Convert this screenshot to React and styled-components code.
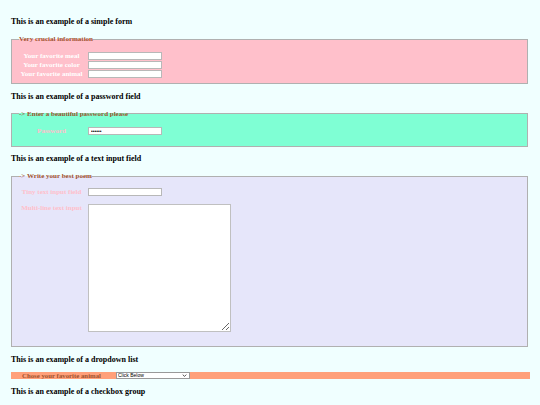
import React from 'react'
import styled, { createGlobalStyle } from 'styled-components'

const GlobalStyle = createGlobalStyle`
    html, body {
        margin: 0;
        padding: 0;
        background: #f0ffff;
    }
    body {
        font-family: "Liberation Serif", "Times New Roman", serif;
    }
`

function App() {
    return (
        <Page>
            <GlobalStyle />
            <Heading>This is an example of a simple form</Heading>
            <Box bg="#ffc0cb" pt="8px" pb="4.5px">
                <Legend>Very crucial information</Legend>
                <Rows gap="1px">
                    <Label color="#ffffff">Your favorite meal</Label>
                    <Field type="text" />
                    <Label color="#ffffff">Your favorite color</Label>
                    <Field type="text" />
                    <Label color="#ffffff">Your favorite animal</Label>
                    <Field type="text" />
                </Rows>
            </Box>

            <Heading gapTop>This is an example of a password field</Heading>
            <Box bg="#7fffd4" pt="8px" pb="11.5px">
                <Legend>-&gt; Enter a beautiful password please</Legend>
                <Rows gap="1px">
                    <Label color="#ffc0cb">Password</Label>
                    <Field type="password" defaultValue="secret" />
                </Rows>
            </Box>

            <Heading>This is an example of a text input field</Heading>
            <Box bg="#e6e6fa" pt="7px" pb="13.5px">
                <Legend>-&gt; Write your best poem</Legend>
                <Rows gap="8px">
                    <Label color="#ffc0cb">Tiny text input field</Label>
                    <Field type="text" />
                    <Label color="#ffc0cb" top>Multi-line text input</Label>
                    <Poem />
                </Rows>
            </Box>

            <Heading gapTop>This is an example of a dropdown list</Heading>
            <Bar>
                <BarLabel>Chose your favorite animal</BarLabel>
                <SelectWrap>
                    <Choice defaultValue="">
                        <option value="">Click Below</option>
                        <option>Cat</option>
                        <option>Dog</option>
                    </Choice>
                    <Chevron viewBox="0 0 8 5">
                        <path d="M1 1 L4 4 L7 1" fill="none" stroke="#222" strokeWidth="1.3" />
                    </Chevron>
                </SelectWrap>
            </Bar>

            <Heading gapTop>This is an example of a checkbox group</Heading>
        </Page>
    )
}

export default App

const Page = styled.div`
    padding: 17px 11px 0 11px;
    display: flex;
    flex-direction: column;
    gap: 7px;
`

const Heading = styled.h3`
    margin: ${props => props.gapTop ? '1px' : '0'} 0 0 0;
    font-size: 8px;
    line-height: 10px;
    font-weight: bold;
    color: #000;
`

const Box = styled.fieldset`
    margin: 0 1px 0 0;
    padding: ${props => props.pt} 3px ${props => props.pb} 3px;
    background: ${props => props.bg};
    border: 1px solid #b0b0b0;
    border-right-width: 1.5px;
    border-bottom-width: 1.5px;
    min-width: 0;
`

const Legend = styled.legend`
    padding: 0;
    margin-left: 4px;
    font-size: 7px;
    line-height: 10px;
    font-weight: bold;
    color: #a0522d;
`

const Rows = styled.div`
    display: grid;
    grid-template-columns: 73px auto;
    justify-content: start;
    row-gap: ${props => props.gap};
    align-items: center;
`

const Label = styled.label`
    font-size: 7px;
    line-height: 8px;
    font-weight: bold;
    color: ${props => props.color};
    text-align: center;
    align-self: ${props => props.top ? 'start' : 'center'};
`

const Field = styled.input`
    box-sizing: border-box;
    width: 74px;
    height: 8px;
    margin: 0;
    padding: 0 2px;
    font-size: 5px;
    border: 1px solid #b8b8b8;
    background: #fff;
    outline: none;
`

const Poem = styled.textarea`
    box-sizing: border-box;
    width: 143px;
    height: 128px;
    margin: 0;
    padding: 0;
    border: 1px solid #c0c0c0;
    background: #fff;
`

const Bar = styled.div`
    display: flex;
    align-items: center;
    height: 7px;
    margin-right: -1px;
    background: #ffa07a;
`

const BarLabel = styled.span`
    padding-left: 11px;
    font-size: 6.8px;
    line-height: 7px;
    font-weight: bold;
    white-space: nowrap;
    color: #a0522d;
`

const SelectWrap = styled.div`
    position: relative;
    display: flex;
    margin-left: 15px;
`

const Choice = styled.select`
    box-sizing: border-box;
    appearance: none;
    width: 74px;
    height: 7px;
    margin: 0;
    padding: 0 0 0 1px;
    font-family: "Liberation Sans", Arial, sans-serif;
    font-size: 5px;
    line-height: 5px;
    color: #000;
    border: 1px solid #999;
    background: #fff;
    border-radius: 0;
    outline: none;
`

const Chevron = styled.svg`
    position: absolute;
    right: 3px;
    top: 2px;
    width: 5px;
    height: 3px;
    pointer-events: none;
`
